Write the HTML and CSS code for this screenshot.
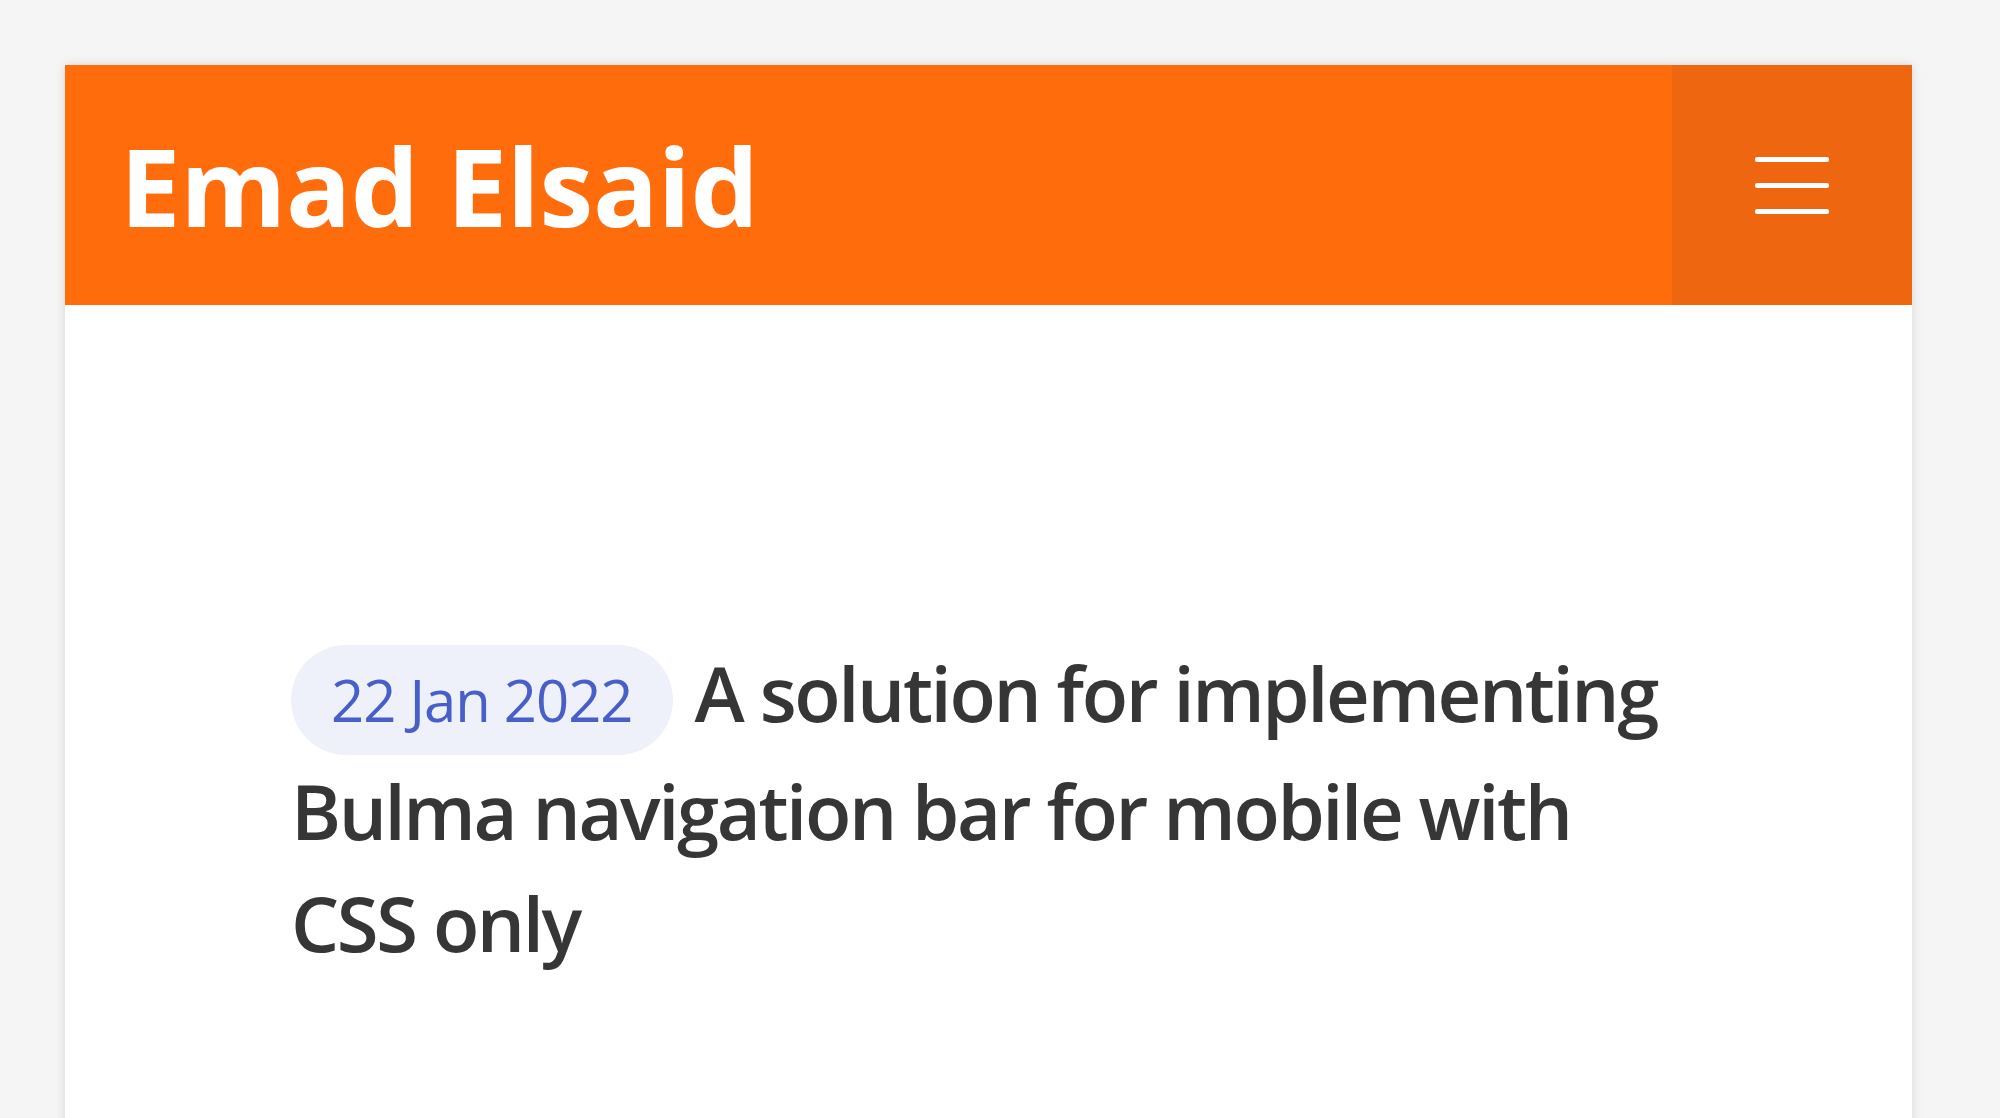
FILE: index.html
```html
<!DOCTYPE html>
<html lang="en">
<head>
<meta charset="utf-8">
<title>Emad Elsaid</title>
<link rel="stylesheet" href="styles.css">
</head>
<body>
<div class="card">
  <nav class="navbar">
    <a class="brand" href="#">Emad Elsaid</a>
    <div class="burger" role="button" aria-label="menu">
      <span></span><span></span><span></span>
    </div>
  </nav>
  <main class="content">
    <h1 class="post-title"><span class="tag">22 Jan 2022</span>A solution for implementing Bulma navigation bar for mobile with CSS only</h1>
  </main>
</div>
</body>
</html>
```
FILE: styles.css
```css
html, body {
  margin: 0;
  padding: 0;
  height: 100%;
  overflow: hidden;
}
body {
  background: #f5f5f5;
  font-family: "Open Sans", "Noto Sans", sans-serif;
  color: #363636;
}
.card {
  margin: 65px 88px 0 65px;
  background: #fff;
  min-height: 1100px;
  box-shadow: 0 0 10px rgba(10, 10, 10, 0.12);
}
.navbar {
  display: flex;
  height: 240px;
  background: #ff6c0c;
}
.brand {
  flex: 1;
  display: flex;
  align-items: center;
  padding-left: 55px;
  color: #fff;
  text-decoration: none;
  font-size: 108px;
  font-weight: 700;
  letter-spacing: -0.3px;
}
.burger {
  width: 240px;
  background: #ef6610;
  display: flex;
  flex-direction: column;
  align-items: center;
  justify-content: center;
  gap: 21px;
}
.burger span {
  display: block;
  width: 74px;
  height: 5px;
  background: #fff;
  border-radius: 2px;
}
.content {
  padding: 332px 226px 0 226px;
}
.post-title {
  margin: 0;
  max-width: 1400px;
  font-size: 76px;
  font-weight: 600;
  line-height: 112px;
  letter-spacing: -2.4px;
  color: #363636;
}
.tag {
  display: inline-block;
  background: #eff1fa;
  color: #485fc7;
  font-size: 58px;
  font-weight: 400;
  line-height: 90px;
  padding: 10px 40px;
  border-radius: 60px;
  margin-right: 22px;
  letter-spacing: -1px;
}
```
